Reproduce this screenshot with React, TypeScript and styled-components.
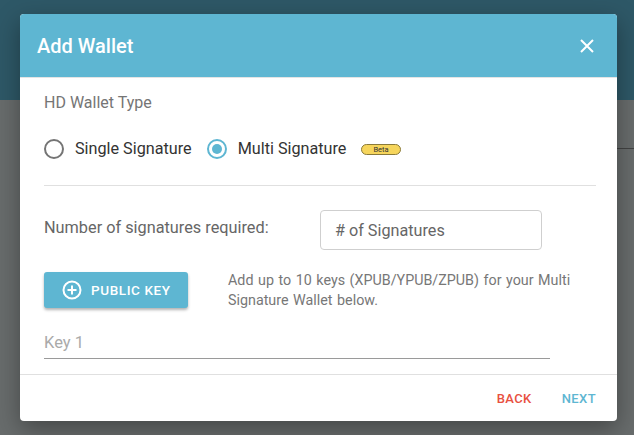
import React from 'react'
import styled, { createGlobalStyle } from 'styled-components'

const GlobalStyle = createGlobalStyle`
  html, body {
    margin: 0;
    padding: 0;
    width: 634px;
    height: 435px;
    overflow: hidden;
    font-family: Roboto, 'Liberation Sans', sans-serif;
  }
`

const Page = styled.div`
  position: relative;
  width: 634px;
  height: 435px;
  background: #686c6c;
  display: flex;
  flex-direction: column;
`

const PageTop = styled.div`
  height: 100px;
  background: #2e5867;
`

const PageBody = styled.div`
  flex: 1;
  display: flex;
  justify-content: flex-end;
  padding-top: 4px;
`

const PageSide = styled.div`
  width: 34px;
  color: #222;
  font-size: 14px;
  display: flex;
  flex-direction: column;
  gap: 6px;
  opacity: 0.7;
`

const SideLabel = styled.div`
  font-size: 9px;
  color: #444;
`

const SideValue = styled.div`
  font-size: 17px;
  color: #111;
  padding-bottom: 8px;
  border-bottom: 1px solid #333;
`

const Modal = styled.div`
  position: absolute;
  left: 20px;
  top: 14px;
  width: 597px;
  background: #fff;
  border-radius: 4px;
  overflow: hidden;
  box-shadow: 0 8px 24px rgba(0, 0, 0, 0.35);
`

const Header = styled.div`
  height: 64px;
  background: #5eb6d2;
  display: flex;
  align-items: center;
  justify-content: space-between;
  padding: 0 20px 0 17px;
  border-bottom: 1px solid #e4e4e4;
  box-sizing: border-box;
`

const Title = styled.div`
  color: #fff;
  font-size: 20px;
  line-height: 24px;
  font-weight: 500;
`

const CloseButton = styled.button`
  border: 0;
  background: none;
  padding: 0;
  width: 20px;
  height: 20px;
  display: flex;
  align-items: center;
  justify-content: center;
  cursor: pointer;
`

const Body = styled.div`
  padding: 16px 21px 15px 24px;
`

const SectionLabel = styled.div`
  color: #757575;
  font-size: 16px;
  line-height: 18px;
`

const RadioRow = styled.div`
  display: flex;
  align-items: center;
  margin-top: 27px;
  padding-bottom: 26px;
  border-bottom: 1px solid #e0e0e0;
`

const RadioOption = styled.label`
  display: flex;
  align-items: center;
  gap: 11px;
  margin-right: 15px;
  color: #333;
  font-size: 16.2px;
  line-height: 20px;
`

const RadioCircle = styled.span<{ $checked?: boolean }>`
  width: 20px;
  height: 20px;
  box-sizing: border-box;
  border-radius: 50%;
  border: 2px solid ${({ $checked }) => ($checked ? '#5eb6d2' : '#757575')};
  display: flex;
  align-items: center;
  justify-content: center;

  &::after {
    content: '';
    width: 10px;
    height: 10px;
    border-radius: 50%;
    background: #5eb6d2;
    display: ${({ $checked }) => ($checked ? 'block' : 'none')};
  }
`

const Badge = styled.span`
  background: #f6d55c;
  border: 1px solid #8a7a3a;
  border-radius: 6px;
  font-size: 7.5px;
  line-height: 9px;
  padding: 0 11px;
  color: #333;
`

const FieldRow = styled.div`
  display: flex;
  align-items: center;
  margin-top: 24px;
`

const FieldLabel = styled.div`
  width: 276px;
  color: #666;
  font-size: 16.3px;
  line-height: 20px;
  padding-bottom: 4px;
`

const TextBox = styled.input`
  width: 222px;
  height: 40px;
  box-sizing: border-box;
  border: 1px solid #cfcfcf;
  border-radius: 4px;
  padding: 0 14px;
  font-family: inherit;
  font-size: 16.2px;
  color: #333;
  outline: none;

  &::placeholder {
    color: #666;
  }
`

const KeyRow = styled.div`
  display: flex;
  align-items: flex-start;
  margin-top: 22px;
  gap: 40px;
`

const AddButton = styled.button`
  width: 144px;
  height: 36px;
  flex-shrink: 0;
  border: 0;
  border-radius: 3px;
  background: #5eb6d2;
  color: #fff;
  font-family: inherit;
  font-size: 13.5px;
  font-weight: 500;
  letter-spacing: 0.6px;
  display: flex;
  align-items: center;
  gap: 9px;
  padding: 0 0 0 18px;
  box-shadow: 0 2px 3px rgba(0, 0, 0, 0.3);
`

const Hint = styled.div`
  color: #777;
  font-size: 14.3px;
  line-height: 20px;
  word-spacing: 1px;
  width: 360px;
  margin-top: -2px;
`

const KeyInput = styled.input`
  display: block;
  width: 506px;
  margin-top: 23px;
  border: 0;
  border-bottom: 1px solid #9a9a9a;
  padding: 0 0 7px;
  font-family: inherit;
  font-size: 16.5px;
  line-height: 18px;
  height: 26px;
  box-sizing: border-box;
  outline: none;

  &::placeholder {
    color: #aaa;
  }
`

const Footer = styled.div`
  border-top: 1px solid #e0e0e0;
  display: flex;
  justify-content: flex-end;
  align-items: center;
  gap: 30px;
  height: 46px;
  padding: 0 21px 0 0;
`

const TextButton = styled.button<{ $color: string }>`
  border: 0;
  background: none;
  padding: 0;
  font-family: inherit;
  font-size: 13px;
  font-weight: 500;
  letter-spacing: 0.4px;
  color: ${({ $color }) => $color};
  cursor: pointer;
`

export default function App() {
  return (
    <Page>
      <GlobalStyle />
      <PageTop />
      <PageBody>
        <PageSide>
          <SideLabel>w</SideLabel>
          <SideValue>B</SideValue>
        </PageSide>
      </PageBody>
      <Modal>
        <Header>
          <Title>Add Wallet</Title>
          <CloseButton aria-label="close">
            <svg width="14" height="14" viewBox="0 0 14 14">
              <path d="M1 1 L13 13 M13 1 L1 13" stroke="#fff" strokeWidth="2" />
            </svg>
          </CloseButton>
        </Header>
        <Body>
          <SectionLabel>HD Wallet Type</SectionLabel>
          <RadioRow>
            <RadioOption>
              <RadioCircle />
              Single Signature
            </RadioOption>
            <RadioOption>
              <RadioCircle $checked />
              Multi Signature
            </RadioOption>
            <Badge>Beta</Badge>
          </RadioRow>
          <FieldRow>
            <FieldLabel>Number of signatures required:</FieldLabel>
            <TextBox placeholder="# of Signatures" />
          </FieldRow>
          <KeyRow>
            <AddButton>
              <svg width="20" height="20" viewBox="0 0 20 20">
                <circle cx="10" cy="10" r="8.5" fill="none" stroke="#fff" strokeWidth="2" />
                <path d="M10 5.5 V14.5 M5.5 10 H14.5" stroke="#fff" strokeWidth="2" />
              </svg>
              PUBLIC KEY
            </AddButton>
            <Hint>Add up to 10 keys (XPUB/YPUB/ZPUB) for your Multi Signature Wallet below.</Hint>
          </KeyRow>
          <KeyInput placeholder="Key 1" />
        </Body>
        <Footer>
          <TextButton $color="#e8503f">BACK</TextButton>
          <TextButton $color="#5eb6d2">NEXT</TextButton>
        </Footer>
      </Modal>
    </Page>
  )
}
